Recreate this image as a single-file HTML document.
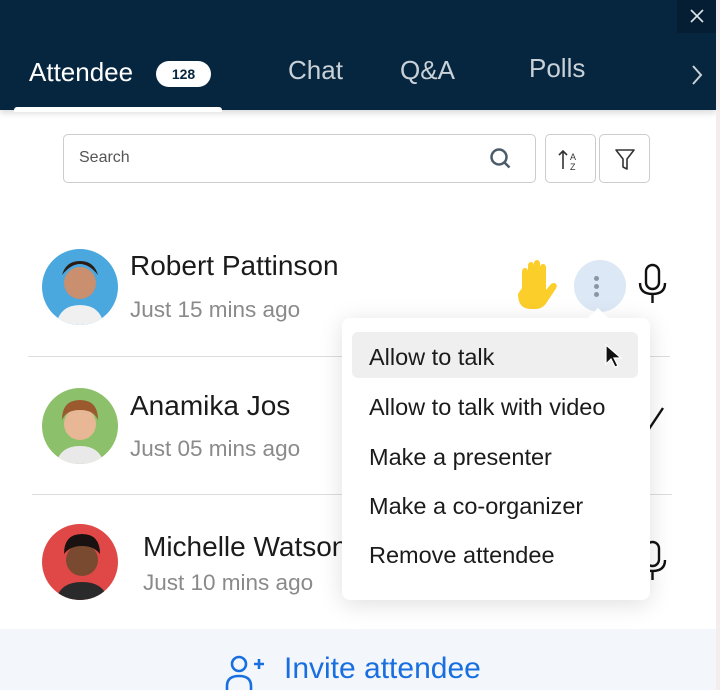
<!DOCTYPE html>
<html><head><style>
*{margin:0;padding:0;box-sizing:border-box}
body{width:720px;height:690px;overflow:hidden;background:#f4eded;font-family:"Liberation Sans",sans-serif;position:relative}
.panel{position:absolute;left:0;top:0;width:716px;height:690px;background:#fff;overflow:hidden}
.hdr{position:absolute;left:0;top:0;width:716px;height:110px;background:#06263f;box-shadow:0 3px 6px rgba(0,0,0,.15)}
.close{position:absolute;left:677px;top:0;width:39px;height:33px;background:#051e33}
.tab{position:absolute;color:#c9d1d8;font-size:26px}
.ul{position:absolute;left:14px;top:107px;width:208px;height:5px;background:#fff;border-radius:3px 3px 0 0}
.badge{position:absolute;left:156px;top:61px;width:55px;height:26px;background:#fff;border-radius:13px;color:#06263f;font-size:14px;font-weight:bold;text-align:center;line-height:26px}
.search{position:absolute;left:63px;top:134px;width:473px;height:49px;border:1px solid #ccc;border-radius:5px;font-size:16px;color:#555;padding:14px 0 0 15px}
.btn{position:absolute;top:134px;width:51px;height:49px;border:1px solid #ccc;border-radius:5px}
.av{position:absolute;width:76px;height:76px;border-radius:50%;overflow:hidden}
.nm{position:absolute;font-size:28px;color:#1b1b1b;white-space:nowrap}
.sb{position:absolute;font-size:22.5px;color:#8a8a8a}
.hr{position:absolute;height:1px;background:#ddd}
.menu{position:absolute;left:342px;top:318px;width:308px;height:282px;background:#fff;border-radius:8px;box-shadow:0 4px 24px rgba(0,0,0,.13)}
.mi{position:absolute;left:27px;font-size:23.5px;color:#1b1b1b;white-space:nowrap}
.bot{position:absolute;left:0;top:629px;width:716px;height:61px;background:#f3f7fc}
</style></head><body>
<div class="panel">
<div class="hdr">
<div class="close"><svg width="39" height="33"><path d="M14 10l12 12M26 10L14 22" stroke="#dfe4e8" stroke-width="1.6"/></svg></div>
<div class="tab" style="left:29px;top:57px;color:#fff">Attendee</div>
<div class="badge">128</div>
<div class="tab" style="left:288px;top:55px">Chat</div>
<div class="tab" style="left:400px;top:55px">Q&amp;A</div>
<div class="tab" style="left:529px;top:53px">Polls</div>
<svg style="position:absolute;left:690px;top:64px" width="14" height="22"><path d="M3 2l8 9-8 9" fill="none" stroke="#c9d1d8" stroke-width="2"/></svg>
<div class="ul"></div>
</div>
<div class="search">Search</div>
<svg style="position:absolute;left:489px;top:147px" width="24" height="24"><circle cx="10" cy="10" r="7.5" fill="none" stroke="#4a5b6a" stroke-width="2.5"/><path d="M15.5 15.5l5 5" stroke="#4a5b6a" stroke-width="2.5"/></svg>
<div class="btn" style="left:545px"><svg width="51" height="49"><path d="M17 34V16m-4 4l4-4 4 4" fill="none" stroke="#333" stroke-width="1.6"/><text x="24" y="25" font-size="9" font-family="Liberation Sans" fill="#333">A</text><text x="24" y="35" font-size="9" font-family="Liberation Sans" fill="#333">Z</text></svg></div>
<div class="btn" style="left:599px"><svg width="51" height="49"><path d="M16 15h18l-7 9v10l-4-2v-8z" fill="none" stroke="#333" stroke-width="1.6" stroke-linejoin="round"/></svg></div>

<div class="av" style="left:42px;top:249px;background:#4aa8de"><svg width="76" height="76"><circle cx="38" cy="34" r="16" fill="#c98f6e"/><path d="M20 26q18-22 36 0q-4-14-18-14t-18 14z" fill="#2b1d16"/><path d="M14 76q4-20 24-20t24 20z" fill="#f0f0f0"/></svg></div>
<div class="nm" style="left:130px;top:250px">Robert Pattinson</div>
<div class="sb" style="left:130px;top:297px">Just 15 mins ago</div>
<svg style="position:absolute;left:514px;top:258px" width="44" height="52"><path d="M8 30V14q0-4 3-4t3 4v10V8q0-4 3-4t3 4v14V6q0-4 3-4t3 4v16V10q0-4 3-4t3 4v22l5-6q3-2 5 0t-1 6l-8 12q-4 7-12 7h-4q-13 0-13-15z" fill="#fcce2a"/></svg>
<div style="position:absolute;left:574px;top:260px;width:52px;height:52px;border-radius:50%;background:#dce8f6"></div>
<div style="position:absolute;left:594px;top:276px;width:5px;height:5px;border-radius:50%;background:#8a96a3;box-shadow:0 8px 0 #8a96a3,0 16px 0 #8a96a3"></div>
<svg style="position:absolute;left:637px;top:263px" width="32" height="42"><rect x="9" y="2" width="13" height="24" rx="6.5" fill="none" stroke="#111" stroke-width="2.4"/><path d="M3 20q0 11 12.5 11T28 20M15.5 31v9" fill="none" stroke="#111" stroke-width="2.4"/></svg>
<div class="hr" style="left:28px;top:356px;width:642px"></div>

<div class="av" style="left:42px;top:388px;background:#8cc06a"><svg width="76" height="76"><circle cx="38" cy="36" r="16" fill="#e8b896"/><path d="M20 32q0-20 18-20t18 20q-4-10-18-10t-18 10z" fill="#9a5a2e"/><path d="M14 76q4-18 24-18t24 18z" fill="#e9e9e9"/></svg></div>
<div class="nm" style="left:130px;top:390px">Anamika Jos</div>
<div class="sb" style="left:130px;top:436px">Just 05 mins ago</div>
<svg style="position:absolute;left:637px;top:402px" width="32" height="42"><path d="M26 6L6 36" stroke="#111" stroke-width="2.4"/></svg>
<div class="hr" style="left:32px;top:494px;width:640px"></div>

<div class="av" style="left:42px;top:524px;background:#e04848"><svg width="76" height="76"><circle cx="40" cy="36" r="16" fill="#7a4a30"/><path d="M22 30q0-20 18-20t18 20q-6-8-18-8t-18 8z" fill="#1a1210"/><path d="M14 76q4-18 26-18t26 18z" fill="#2a2a2a"/></svg></div>
<div class="nm" style="left:143px;top:531px">Michelle Watson</div>
<div class="sb" style="left:143px;top:570px">Just 10 mins ago</div>
<svg style="position:absolute;left:637px;top:540px" width="32" height="42"><rect x="9" y="2" width="13" height="24" rx="6.5" fill="none" stroke="#111" stroke-width="2.4"/><path d="M3 20q0 11 12.5 11T28 20M15.5 31v9" fill="none" stroke="#111" stroke-width="2.4"/></svg>

<div class="menu">
<svg style="position:absolute;left:244px;top:-10px" width="24" height="12"><path d="M0 12L12 0l12 12z" fill="#fff"/></svg>
<div style="position:absolute;left:10px;top:14px;width:286px;height:46px;background:#efefef;border-radius:6px"></div>
<div class="mi" style="top:26px">Allow to talk</div>
<div class="mi" style="top:76px">Allow to talk with video</div>
<div class="mi" style="top:126px">Make a presenter</div>
<div class="mi" style="top:175px">Make a co-organizer</div>
<div class="mi" style="top:224px">Remove attendee</div>
<svg style="position:absolute;left:262px;top:25px" width="20" height="26"><path d="M2 2v19l5-5 4 8 3-1-4-8h7z" fill="#111" stroke="#fff" stroke-width="1.2"/></svg>
</div>

<div class="bot">
<svg style="position:absolute;left:224px;top:25px" width="42" height="36"><circle cx="15" cy="10" r="7" fill="none" stroke="#1a6fe0" stroke-width="2.6"/><path d="M3 36v-4q0-10 12-10t12 10v4M30 10h10M35 5v10" fill="none" stroke="#1a6fe0" stroke-width="2.6"/></svg>
<div style="position:absolute;left:284px;top:23px;font-size:30px;color:#1a6fe0">Invite attendee</div>
</div>
</div>
</body></html>
